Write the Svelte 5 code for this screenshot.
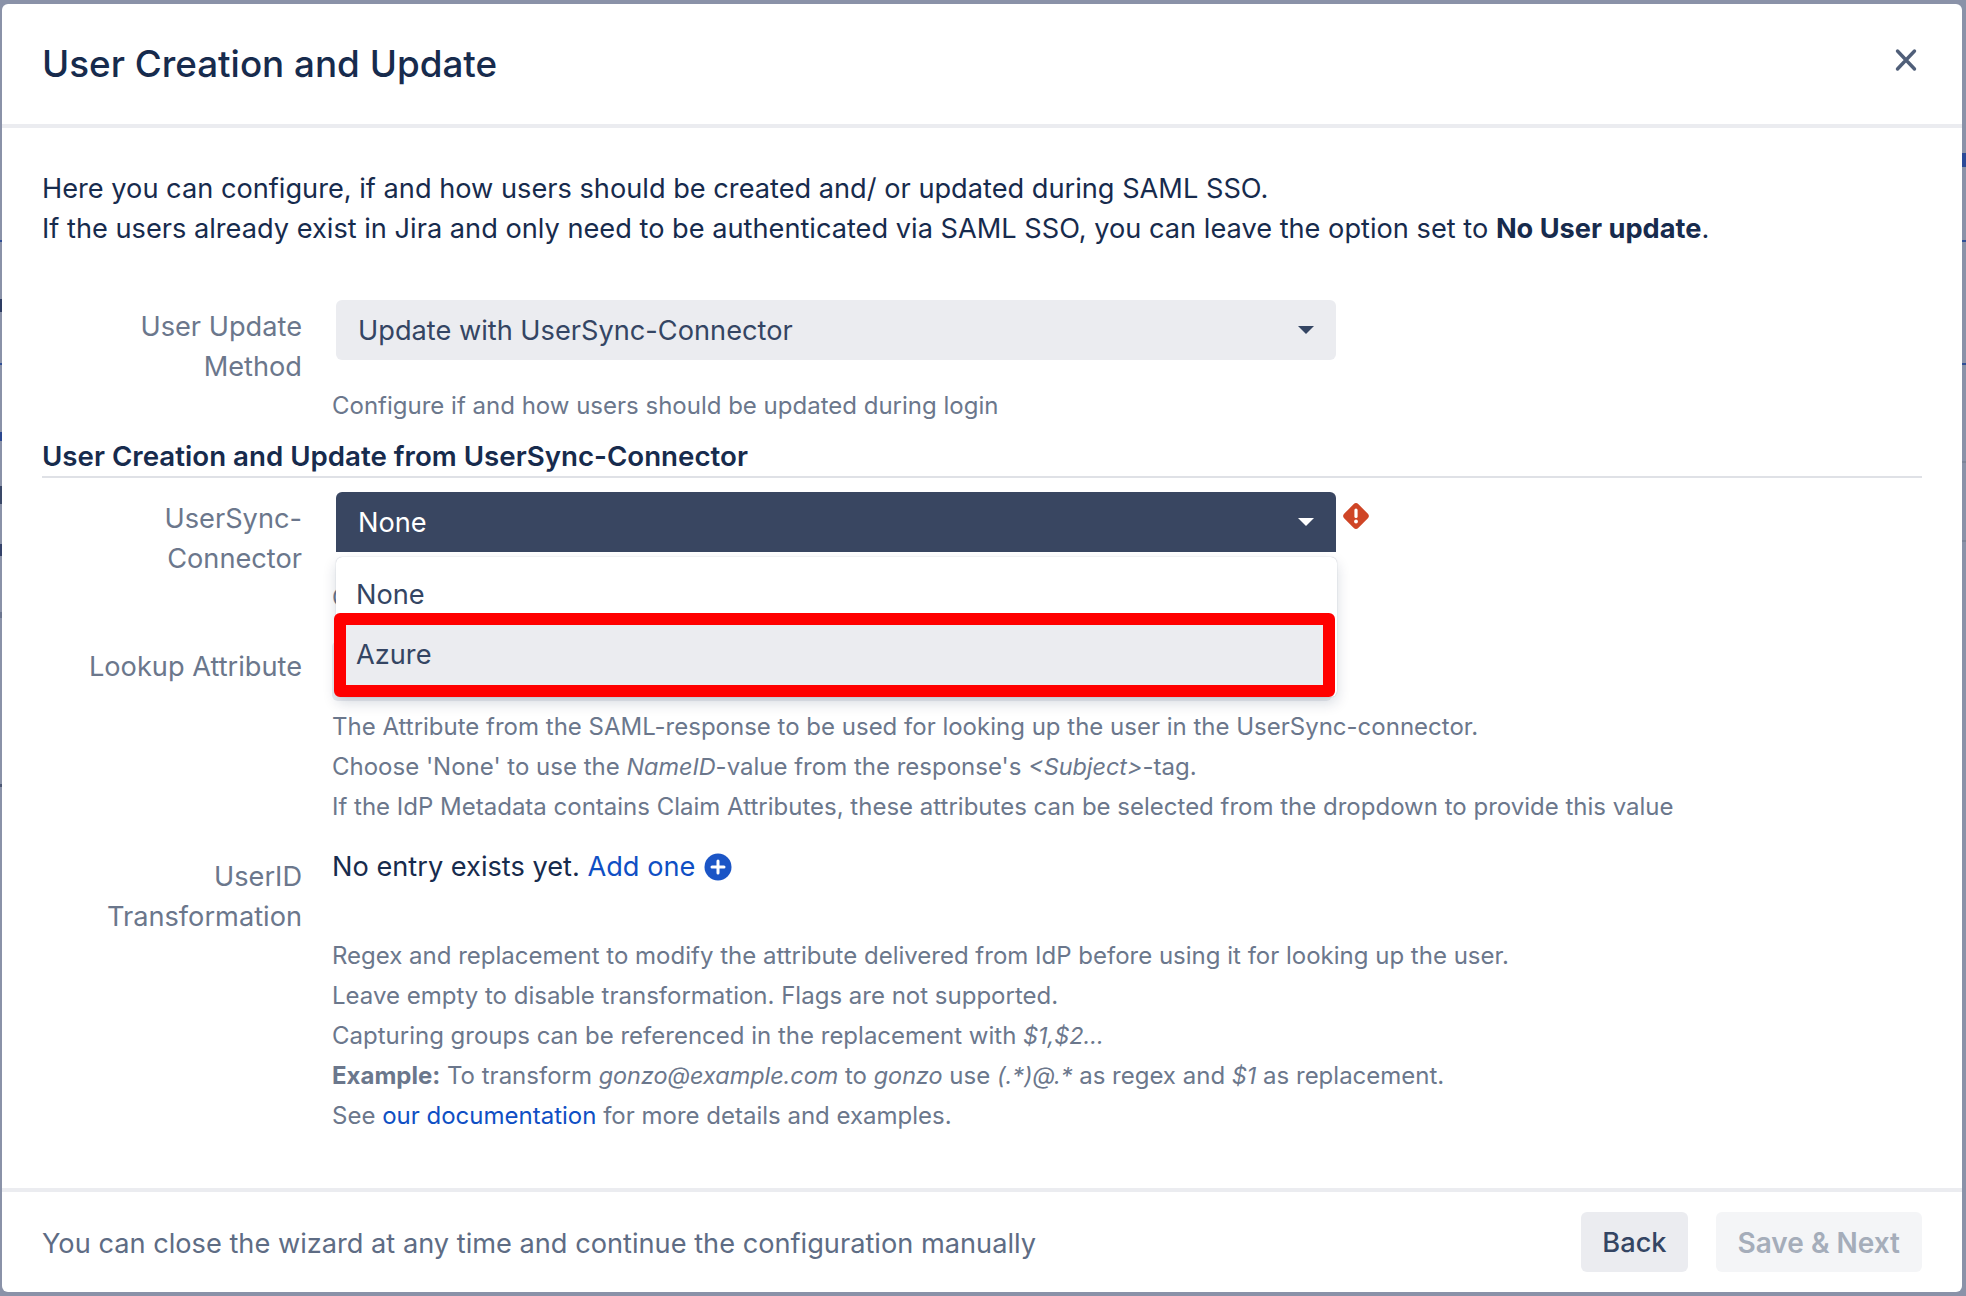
<script>
// User Creation and Update wizard step, with the connector dropdown open

// bits of the page behind the dialog that show in the narrow side gutters
const slivers = [
  { side: 'left', top: 240, h: 2, color: '#2f4f96' },
  { side: 'left', top: 363, h: 2, color: '#2f4f96' },
  { side: 'left', top: 299, h: 13, color: '#2d3c63' },
  { side: 'left', top: 432, h: 9, color: '#2b478f' },
  { side: 'left', top: 486, h: 18, color: '#3a4868' },
  { side: 'left', top: 544, h: 12, color: '#34426a' },
  { side: 'left', top: 612, h: 6, color: '#6c7690' },
  { side: 'left', top: 784, h: 3, color: '#4c5875' },
  { side: 'right', top: 153, h: 14, color: '#2b4a98' },
  { side: 'right', top: 240, h: 2, color: '#2f4f96' },
  { side: 'right', top: 363, h: 2, color: '#2f4f96' },
  { side: 'right', top: 461, h: 2, color: '#7d8598' },
  { side: 'right', top: 540, h: 2, color: '#7d8598' }
];
</script>

<div class="backdrop">
  {#each slivers as s}
    <span class="sliver {s.side}" style="top:{s.top}px;height:{s.h}px;background:{s.color}"></span>
  {/each}

  <div class="modal">
    <header class="head">
      <h1>User Creation and Update</h1>
      <button class="close" aria-label="Close">
        <svg width="24" height="24" viewBox="0 0 24 24"><path d="M3.5 3 L20.5 21 M20.5 3 L3.5 21" stroke="#505f79" stroke-width="3.4" stroke-linecap="round" fill="none"/></svg>
      </button>
    </header>

    <div class="body">
      <p class="intro">
        Here you can configure, if and how users should be created and/ or updated during SAML SSO.<br>
        If the users already exist in Jira and only need to be authenticated via SAML SSO, you can leave the option set to <b>No User update</b>.
      </p>

      <div class="row first">
        <div class="label">User Update Method</div>
        <div class="field">
          <div class="select">
            <span>Update with UserSync-Connector</span>
            <i class="caret"></i>
          </div>
          <div class="help after-select">Configure if and how users should be updated during login</div>
        </div>
      </div>

      <h2>User Creation and Update from UserSync-Connector</h2>

      <div class="row connector">
        <div class="label">UserSync-Connector</div>
        <div class="field">
          <div class="select-wrap">
            <div class="select open">
              <span>None</span>
              <i class="caret"></i>
            </div>
            <svg class="err" width="30" height="30" viewBox="0 0 30 30">
              <rect x="5" y="5" width="20" height="20" rx="3.5" transform="rotate(45 15 15)" fill="#cf4526"/>
              <rect x="13.4" y="7.5" width="3.2" height="9.5" rx="1.6" fill="#fff"/>
              <circle cx="15" cy="20.5" r="1.9" fill="#fff"/>
            </svg>
          </div>
          <div class="help after-select">Choose the connector</div>
          <div class="menu">
            <div class="option">None</div>
            <div class="option active">Azure</div>
          </div>
        </div>
      </div>

      <div class="row lookup">
        <div class="label">Lookup Attribute</div>
        <div class="field">
          <div class="select under"></div>
          <div class="help">
            <div>The Attribute from the SAML-response to be used for looking up the user in the UserSync-connector.</div>
            <div>Choose 'None' to use the <em>NameID</em>-value from the response's <em>&lt;Subject&gt;</em>-tag.</div>
            <div>If the IdP Metadata contains Claim Attributes, these attributes can be selected from the dropdown to provide this value</div>
          </div>
        </div>
      </div>

      <div class="row transform">
        <div class="label">UserID Transformation</div>
        <div class="field">
          <div class="entry">
            <span>No entry exists yet. <a href="#add">Add one</a></span>
            <svg class="plus" width="28" height="28" viewBox="0 0 28 28">
              <circle cx="14" cy="14" r="13.5" fill="#1b55c6"/>
              <path d="M14 8 V20 M8 14 H20" stroke="#fff" stroke-width="3" stroke-linecap="round"/>
            </svg>
          </div>
          <div class="help">
            <div>Regex and replacement to modify the attribute delivered from IdP before using it for looking up the user.</div>
            <div>Leave empty to disable transformation. Flags are not supported.</div>
            <div>Capturing groups can be referenced in the replacement with <em>$1,$2...</em></div>
            <div><b>Example:</b> To transform <em>gonzo@example.com</em> to <em>gonzo</em> use <em>(.*)@.*</em> as regex and <em>$1</em> as replacement.</div>
            <div>See <a href="#docs">our documentation</a> for more details and examples.</div>
          </div>
        </div>
      </div>
    </div>

    <footer class="foot">
      <span class="note">You can close the wizard at any time and continue the configuration manually</span>
      <div class="actions">
        <button class="btn back">Back</button>
        <button class="btn disabled">Save &amp; Next</button>
      </div>
    </footer>
  </div>
</div>

<style>
  :global(body) {
    margin: 0;
    background: #8a92a8;
  }
  .backdrop {
    position: relative;
    height: 1296px;
    box-sizing: border-box;
    padding: 4px 4px 4px 2px;
    font-family: Inter, "Liberation Sans", sans-serif;
    color: #172b4d;
    font-size: 27.2px;
    line-height: 40px;
  }
  .sliver {
    position: absolute;
    width: 2px;
  }
  .sliver.left {
    left: 0;
  }
  .sliver.right {
    right: 0;
    width: 4px;
  }
  .modal {
    height: 1288px;
    background: #fff;
    border-radius: 6px;
    display: flex;
    flex-direction: column;
  }
  .head {
    height: 120px;
    border-bottom: 4px solid #ebecf0;
    padding: 0 40px;
    display: flex;
    align-items: center;
    justify-content: space-between;
    flex-shrink: 0;
  }
  h1 {
    margin: 0;
    font-size: 36.8px;
    font-weight: 500;
    line-height: 48px;
  }
  .close {
    background: none;
    border: 0;
    padding: 0;
    margin: -8px 4px 0 0;
    display: flex;
  }
  .body {
    flex: 1;
    padding: 41px 40px 0;
  }
  .intro {
    margin: 0;
  }
  .intro b {
    font-weight: 700;
  }
  .row {
    display: grid;
    grid-template-columns: 260px 1fr;
    column-gap: 30px;
  }
  .first {
    margin-top: 51px;
  }
  .label {
    text-align: right;
    color: #6b778c;
    padding-top: 7px;
  }
  .field {
    position: relative;
    min-width: 0;
  }
  .select {
    width: 1000px;
    height: 60px;
    margin-left: 4px;
    box-sizing: border-box;
    padding: 2px 22px 0;
    background: #ebecf0;
    border-radius: 6px;
    color: #344563;
    display: flex;
    align-items: center;
    justify-content: space-between;
  }
  .caret {
    width: 0;
    height: 0;
    margin-top: -2px;
    border-left: 8px solid transparent;
    border-right: 8px solid transparent;
    border-top: 8px solid #344563;
  }
  .select.open {
    background: #394661;
    color: #fff;
    border-radius: 6px 6px 0 0;
  }
  .select.open .caret {
    border-top-color: #fff;
  }
  .select-wrap {
    position: relative;
    width: fit-content;
  }
  .err {
    position: absolute;
    left: 1009px;
    top: 9px;
  }
  .help {
    color: #6b778c;
    font-size: 24px;
  }
  .help b {
    font-weight: 700;
  }
  .help em {
    font-size: 23.4px;
  }
  .help a,
  .entry a {
    color: #0f4fc4;
    text-decoration: none;
  }
  .after-select {
    margin-top: 26px;
  }
  h2 {
    margin: 10px 0 0;
    font-size: 27.7px;
    font-weight: 600;
    line-height: 40px;
    border-bottom: 2px solid #dfe1e6;
  }
  .connector {
    margin-top: 14px;
  }
  .menu {
    position: absolute;
    z-index: 5;
    left: 4px;
    top: 65px;
    width: 1001px;
    box-sizing: border-box;
    background: #fff;
    border-radius: 6px;
    box-shadow: 0 0 1px rgba(9, 30, 66, 0.35), 0 6px 14px rgba(9, 30, 66, 0.16);
  }
  .option {
    height: 56px;
    box-sizing: border-box;
    padding: 18px 0 0 20px;
    color: #344563;
  }
  .option.active {
    height: 84px;
    margin: 0 2px 0 -2px;
    border: 12px solid #ff0000;
    border-radius: 6px;
    background: #ebecf0;
    display: flex;
    align-items: center;
    padding: 0 0 0 10px;
  }
  .lookup {
    margin-top: 23px;
  }
  .lookup .label {
    padding-top: 6px;
  }
  .select.under {
    margin-left: 0;
  }
  .lookup .help {
    margin-top: 6px;
  }
  .transform {
    margin-top: 21px;
  }
  .transform .label {
    padding-top: 9px;
  }
  .entry {
    display: flex;
    align-items: center;
    gap: 9px;
    margin-top: -1px;
  }
  .transform .help {
    margin-top: 49px;
  }
  .foot {
    height: 100px;
    border-top: 4px solid #ebecf0;
    padding: 0 40px;
    display: flex;
    align-items: center;
    justify-content: space-between;
    color: #5e6c84;
    flex-shrink: 0;
  }
  .note {
    padding-top: 4px;
  }
  .actions {
    display: flex;
    gap: 28px;
  }
  .btn {
    height: 60px;
    padding: 2px 22px 0;
    border: 0;
    border-radius: 6px;
    background: #ebecf0;
    color: #344563;
    font: inherit;
    font-weight: 500;
  }
  .btn.back {
    padding: 2px 21px 0;
  }
  .btn.disabled {
    background: #f4f5f7;
    color: #a5adba;
    font-size: 28px;
    font-weight: 600;
  }
</style>
